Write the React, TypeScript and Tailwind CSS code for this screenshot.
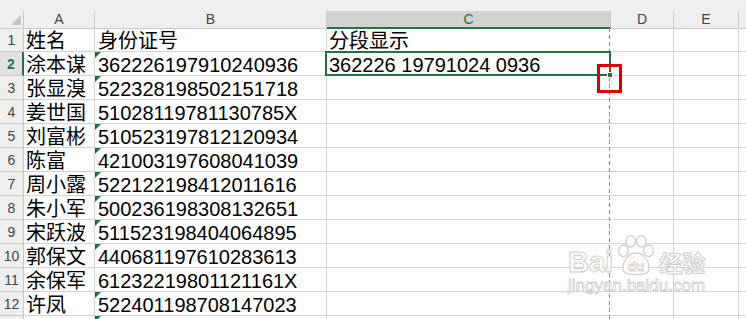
const rows: [string, string, string, boolean][] = [
  ["姓名", "身份证号", "分段显示", false],
  ["涂本谋", "362226197910240936", "362226 19791024 0936", true],
  ["张显溴", "522328198502151718", "", true],
  ["姜世国", "51028119781130785X", "", false],
  ["刘富彬", "510523197812120934", "", true],
  ["陈富", "421003197608041039", "", true],
  ["周小露", "522122198412011616", "", true],
  ["朱小军", "500236198308132651", "", true],
  ["宋跃波", "511523198404064895", "", true],
  ["郭保文", "440681197610283613", "", true],
  ["余保军", "61232219801121161X", "", false],
  ["许凤", "522401198708147023", "", true],
  ["", "", "", true],
];

const font = "font-['Liberation_Sans','Noto_Sans_CJK_SC',sans-serif]";
const grid = "grid grid-cols-[24px_71px_232px_284px_63px_65px_1fr]";
const line = "border-[#d4d4d4]";

function Triangle() {
  return <div className="absolute left-0 top-0 w-0 h-0 border-t-[6px] border-r-[6px] border-t-[#1e7145] border-r-transparent" />;
}

function Watermark() {
  return (
    <div className="absolute left-[568px] top-[234px] flex flex-col items-center pointer-events-none">
      <div className="flex items-end gap-[1px] text-white [-webkit-text-stroke:1px_#cfcfcf] font-['Liberation_Sans',sans-serif] font-bold">
        <span className="text-[29px] leading-[28px]">Bai</span>
        <svg width="44" height="44" viewBox="0 0 42 42" className="-mb-[2px]">
          <g fill="white" stroke="#cfcfcf" strokeWidth="1.2">
            <ellipse cx="9" cy="16" rx="4.5" ry="5.5" />
            <ellipse cx="16" cy="7" rx="4.5" ry="5.5" />
            <ellipse cx="26" cy="7" rx="4.5" ry="5.5" />
            <ellipse cx="33" cy="16" rx="4.5" ry="5.5" />
            <path d="M21 18 C13 18 7 28 9 35 C11 40 31 40 33 35 C35 28 29 18 21 18 Z" />
          </g>
          <text x="21" y="35" textAnchor="middle" fontSize="13" fill="white" stroke="#cfcfcf" strokeWidth="0.8" fontFamily="Liberation Sans">du</text>
        </svg>
        <span className="text-[23px] leading-[28px] font-['Noto_Sans_CJK_SC',sans-serif]">经验</span>
      </div>
      <span className="text-[17px] leading-[20px] text-white [-webkit-text-stroke:0.8px_#cfcfcf] font-['Liberation_Sans',sans-serif]">jingyan.baidu.com</span>
    </div>
  );
}

export default function App() {
  return (
    <div className={`relative w-[746px] h-[319px] overflow-hidden bg-white ${font}`}>
      <div className="h-[11px] bg-[#efefef]" />
      <div className={`${grid} h-[17px] bg-[#efefef] text-[14px] leading-[16px] text-[#444]`}>
        <div className="relative border-r border-b border-[#c8c8c8]">
          <svg width="10" height="10" viewBox="0 0 10 10" className="absolute left-[11px] top-[4px]">
            <polygon points="10,0 10,10 0,10" fill="#c4c4c4" />
          </svg>
        </div>
        <div className="flex justify-center border-r border-b border-[#c8c8c8]">A</div>
        <div className="flex justify-center border-r border-b border-[#c8c8c8]">B</div>
        <div className="flex justify-center bg-[#d2d2d2] border-r border-[#c8c8c8] border-b-2 border-b-[#217346] text-[#217346]">C</div>
        <div className="flex justify-center border-r border-b border-[#c8c8c8]">D</div>
        <div className="flex justify-center border-r border-b border-[#c8c8c8]">E</div>
        <div className="border-b border-[#c8c8c8]" />
      </div>
      {rows.map(([name, id, split, flag], i) => {
        const sel = i === 1;
        return (
          <div key={i} className={`${grid} h-[24px] text-[20px] leading-[20px] text-black`}>
            <div
              className={`flex items-center justify-center text-[14px] border-b border-[#c8c8c8] ${
                sel ? "bg-[#e1e1e1] text-[#217346] font-bold border-r-2 border-r-[#217346]" : "bg-[#efefef] text-[#444] border-r"
              }`}
            >
              {i < 12 ? i + 1 : ""}
            </div>
            <div className={`flex items-end pl-[2px] border-r border-b ${line}`}>{name}</div>
            <div className={`relative flex items-end pl-[3px] border-r border-b ${line}`}>
              {flag && <Triangle />}
              {id}
            </div>
            <div className={`relative flex items-end pl-[2px] border-b ${line}`}>
              {split}
              {sel && (
                <>
                  <div className="absolute -left-[2px] right-0 -top-[1px] -bottom-[1px] border-2 border-[#217346] z-10" />
                  <div className="absolute right-[-2px] bottom-[-3px] w-[6px] h-[6px] bg-[#217346] border border-white z-20" />
                </>
              )}
            </div>
            <div className={`border-r border-b ${line}`} />
            <div className={`border-r border-b ${line}`} />
            <div className={`border-b ${line}`} />
          </div>
        );
      })}
      <div className="absolute left-[609px] top-[28px] bottom-0 w-[1px] bg-[repeating-linear-gradient(to_bottom,#8c8c8c_0_4px,transparent_4px_7px)]" />
      <div className="absolute left-[597px] top-[64px] w-[25px] h-[29px] border-[3px] border-[#e00000] z-30" />
      <Watermark />
    </div>
  );
}
